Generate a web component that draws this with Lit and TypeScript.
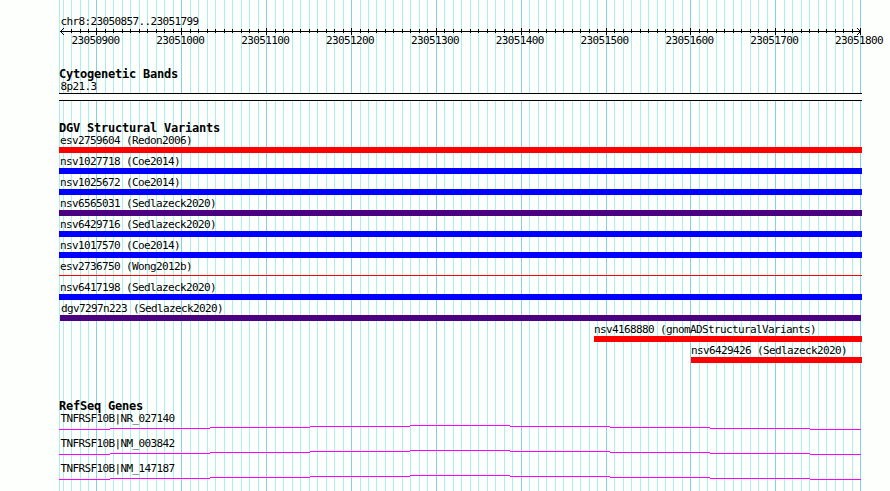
import { LitElement, css, html, svg } from "lit";
import { customElement, property } from "lit/decorators.js";

interface Variant {
  name: string;
  color: string;
  start: number;
  end: number;
  thin?: boolean;
}

const VIEW_LEFT = 59;
const VIEW_RIGHT = 862;
const PX_PER_TEN = 8.485;
const ORIGIN = 96.99;

const RED = "#ff0000";
const BLUE = "#0000ff";
const INDIGO = "#4b0082";

const VARIANTS: Variant[] = [
  { name: "esv2759604 (Redon2006)", color: RED, start: 59, end: 862 },
  { name: "nsv1027718 (Coe2014)", color: BLUE, start: 59, end: 862 },
  { name: "nsv1025672 (Coe2014)", color: BLUE, start: 59, end: 862 },
  { name: "nsv6565031 (Sedlazeck2020)", color: INDIGO, start: 59, end: 862 },
  { name: "nsv6429716 (Sedlazeck2020)", color: BLUE, start: 59, end: 862 },
  { name: "nsv1017570 (Coe2014)", color: BLUE, start: 59, end: 862 },
  { name: "esv2736750 (Wong2012b)", color: RED, start: 59, end: 862, thin: true },
  { name: "nsv6417198 (Sedlazeck2020)", color: BLUE, start: 59, end: 862 },
  { name: "dgv7297n223 (Sedlazeck2020)", color: INDIGO, start: 60, end: 861 },
  { name: "nsv4168880 (gnomADStructuralVariants)", color: RED, start: 594, end: 862 },
  { name: "nsv6429426 (Sedlazeck2020)", color: RED, start: 691, end: 862 },
];

const GENES = ["TNFRSF10B|NR_027140", "TNFRSF10B|NM_003842", "TNFRSF10B|NM_147187"];

// One entry per 10 bp, from 23050860 to 23051800
const TICKS = Array.from({ length: 95 }, (_, i) => {
  const k = i - 4;
  return { x: Math.floor(ORIGIN + k * PX_PER_TEN), major: k % 10 === 0, pos: 23050900 + k * 10 };
});

@customElement("browser-grid")
export class BrowserGrid extends LitElement {
  static styles = css`
    :host { display: block; }
    svg { display: block; }
    .minor { fill: #afeeee; }
    .major { fill: #87ceeb; }
  `;

  render() {
    return html`
      <svg width="890" height="491" shape-rendering="crispEdges">
        <rect class="minor" x=${VIEW_LEFT} y="0" width="1" height="491"></rect>
        ${TICKS.map((t) => svg`
          <rect class="${t.major ? "major" : "minor"}" x=${t.x} y="0" width="1" height="491"></rect>
        `)}
      </svg>
    `;
  }
}

@customElement("browser-ruler")
export class BrowserRuler extends LitElement {
  static styles = css`
    :host { display: block; }
    svg { display: block; }
    .labels { display: flex; padding-left: 71.5px; height: 12px; }
    .labels span { flex: none; width: 84.85px; line-height: 12px; white-space: nowrap; }
  `;

  render() {
    return html`
      <svg width="890" height="8" shape-rendering="crispEdges">
        <rect x="60" y="4" width="801" height="1"></rect>
        ${TICKS.slice(1).map((t) => svg`
          <rect x=${t.x} y=${t.major ? 1 : 2} width="1" height=${t.major ? 7 : 4}></rect>
        `)}
        <path d="M60 4h1v1h-1zM61 3h1v1h-1zM62 2h1v1h-1zM63 1h1v1h-1zM61 5h1v1h-1zM62 6h1v1h-1zM63 7h1v1h-1z"></path>
        <path d="M859 3h1v1h-1zM858 2h1v1h-1zM857 1h1v1h-1zM859 5h1v1h-1zM858 6h1v1h-1zM857 7h1v1h-1z"></path>
      </svg>
      <div class="labels">
        ${TICKS.filter((t) => t.major).map((t) => html`<span>${t.pos}</span>`)}
      </div>
    `;
  }
}

@customElement("variant-row")
export class VariantRow extends LitElement {
  static styles = css`
    :host { display: block; height: 21px; }
    .label { height: 12px; line-height: 12px; padding-left: 1px; white-space: pre; }
    .name-inset { padding-left: 0; }
    .bar { height: 6px; }
    .thin { height: 1px; margin-top: 2px; }
  `;

  @property({ type: Object }) variant!: Variant;

  render() {
    const v = this.variant;
    return html`
      <div style="margin-left:${v.start}px; width:${v.end - v.start}px">
        <div class="label ${v.start > VIEW_LEFT + 1 ? "name-inset" : ""}">${v.name}</div>
        <div class="bar ${v.thin ? "thin" : ""}" style="background:${v.color}"></div>
      </div>
    `;
  }
}

@customElement("gene-row")
export class GeneRow extends LitElement {
  static styles = css`
    :host { display: block; height: 25px; }
    .label { height: 12px; line-height: 12px; padding-left: 60.5px; white-space: pre; }
    svg { display: block; }
    path { stroke: #ff00ff; fill: none; }
  `;

  @property() name = "";

  render() {
    return html`
      <div class="label">${this.name}</div>
      <svg width="890" height="6" shape-rendering="crispEdges">
        <path d="M59 4.5H110M110 3.5H210M210 2.5H310M310 1.5H410M410 .5H510M510 1.5H610M610 2.5H710M710 3.5H810M810 4.5H861"></path>
      </svg>
    `;
  }
}

@customElement("app-root")
export class AppRoot extends LitElement {
  static styles = css`
    :host {
      display: grid;
      width: 890px;
      height: 491px;
      overflow: hidden;
      background: #fdfffc;
      color: #000;
      font-family: "DejaVu Sans Mono", monospace;
      font-size: 11px;
      letter-spacing: -0.622px;
    }
    browser-grid, .tracks { grid-area: 1 / 1; }
    .tracks { min-width: 0; padding-top: 15px; z-index: 1; }
    .region { height: 12px; line-height: 14px; padding-left: 60.5px; }
    h2 {
      margin: 0;
      height: 13px;
      line-height: 13px;
      padding-left: 59px;
      font-size: 12px;
      font-weight: bold;
      letter-spacing: -0.224px;
    }
    .bands { padding-top: 21px; }
    .band-label { height: 12px; line-height: 12px; padding-left: 60.5px; }
    .band {
      box-sizing: border-box;
      height: 8px;
      margin-left: 59px;
      border: solid #000;
      border-width: 1px 0;
      background: #fdfffc;
    }
    .variants { padding-top: 21px; }
    .genes { padding-top: 34px; }
  `;

  render() {
    return html`
      <browser-grid></browser-grid>
      <div class="tracks">
        <div class="region">chr8:23050857..23051799</div>
        <browser-ruler></browser-ruler>
        <section class="bands">
          <h2>Cytogenetic Bands</h2>
          <div class="band-label">8p21.3</div>
          <div class="band" style="width:${VIEW_RIGHT - VIEW_LEFT}px"></div>
        </section>
        <section class="variants">
          <h2>DGV Structural Variants</h2>
          ${VARIANTS.map((v) => html`<variant-row .variant=${v}></variant-row>`)}
        </section>
        <section class="genes">
          <h2>RefSeq Genes</h2>
          ${GENES.map((g) => html`<gene-row name=${g}></gene-row>`)}
        </section>
      </div>
    `;
  }
}
